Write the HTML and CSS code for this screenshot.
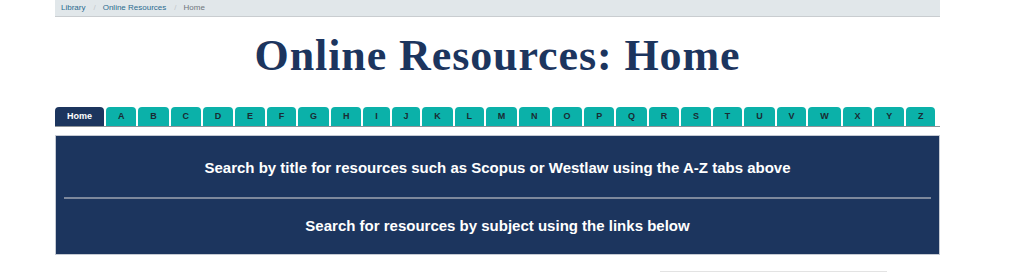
FILE: index.html
```html
<!DOCTYPE html>
<html lang="en">

<head>
    <meta charset="UTF-8">
    <meta name="viewport" content="width=device-width, initial-scale=1.0">
    <title>Online Resources: Home</title>
    <link rel="stylesheet" href="styles.css">
</head>

<body>
    <div class="wrap">
        <ol class="crumbs">
            <li><a href="javascript:;">Library</a></li>
            <li><a href="javascript:;">Online Resources</a></li>
            <li class="current">Home</li>
        </ol>
        <h1 class="title">Online Resources: Home</h1>
        <ul class="tabs">
            <li class="active"><a href="javascript:;">Home</a></li>
            <li><a href="javascript:;">A</a></li>
            <li><a href="javascript:;">B</a></li>
            <li><a href="javascript:;">C</a></li>
            <li><a href="javascript:;">D</a></li>
            <li><a href="javascript:;">E</a></li>
            <li><a href="javascript:;">F</a></li>
            <li><a href="javascript:;">G</a></li>
            <li><a href="javascript:;">H</a></li>
            <li><a href="javascript:;">I</a></li>
            <li><a href="javascript:;">J</a></li>
            <li><a href="javascript:;">K</a></li>
            <li><a href="javascript:;">L</a></li>
            <li><a href="javascript:;">M</a></li>
            <li><a href="javascript:;">N</a></li>
            <li><a href="javascript:;">O</a></li>
            <li><a href="javascript:;">P</a></li>
            <li><a href="javascript:;">Q</a></li>
            <li><a href="javascript:;">R</a></li>
            <li><a href="javascript:;">S</a></li>
            <li><a href="javascript:;">T</a></li>
            <li><a href="javascript:;">U</a></li>
            <li><a href="javascript:;">V</a></li>
            <li><a href="javascript:;">W</a></li>
            <li><a href="javascript:;">X</a></li>
            <li><a href="javascript:;">Y</a></li>
            <li><a href="javascript:;">Z</a></li>
        </ul>
        <div class="intro">
            <p>Search by title for resources such as Scopus or Westlaw using the A-Z tabs above</p>
            <hr>
            <p>Search for resources by subject using the links below</p>
        </div>
        <div class="below">
            <div class="side"></div>
        </div>
    </div>
</body>

</html>
```

FILE: styles.css
```css
*{
    margin: 0;
    padding: 0;
}
body{
    font-family: "Liberation Sans", Arial, sans-serif;
    background: #fff;
}
.wrap{
    margin-left: 55px;
    width: 885px;
}
.crumbs{
    display: flex;
    height: 16px;
    padding-left: 6px;
    list-style: none;
    font-size: 8px;
    line-height: 16px;
    background: #e1e7ea;
    border-bottom: 1px solid #c9cdd0;
}
.crumbs li + li::before{
    content: "/";
    padding: 0 7px 0 8px;
    color: #c4c8cb;
}
.crumbs a{
    color: #2b6b8f;
    text-decoration: none;
}
.crumbs .current{
    color: #6f767b;
}
.title{
    margin: 17px 0 29px;
    color: #1c355e;
    font-family: "Liberation Serif", Georgia, serif;
    font-size: 44px;
    letter-spacing: 0.9px;
    line-height: 44px;
    text-align: center;
}
.tabs{
    display: flex;
    gap: 2px;
    height: 19px;
    list-style: none;
    border-bottom: 1px solid #8e9499;
}
.tabs li{
    background: #0bb1a9;
    border-radius: 4px 4px 0 0;
}
.tabs a{
    display: block;
    padding: 0 11.9px;
    color: #1a2b33;
    font-size: 9px;
    font-weight: bold;
    line-height: 19px;
    text-decoration: none;
}
.tabs .active{
    background: #1c355e;
}
.tabs .active a{
    width: 49px;
    padding: 0;
    color: #fff;
    text-align: center;
}
.intro{
    margin-top: 8px;
    height: 118px;
    background: #1c355e;
    border: 1px solid #c5cad3;
    color: #fff;
    text-align: center;
}
.intro p{
    font-size: 15px;
    font-weight: bold;
    line-height: 20px;
}
.intro p:first-child{
    margin-top: 22px;
}
.intro hr{
    margin: 19px 8px 17px;
    height: 2px;
    border: none;
    background: #7d889c;
}
.below{
    display: flex;
    justify-content: flex-end;
    padding-top: 16px;
}
.side{
    margin-right: 53px;
    width: 227px;
    height: 8px;
    border-top: 1px solid #e3e3e3;
}
```
